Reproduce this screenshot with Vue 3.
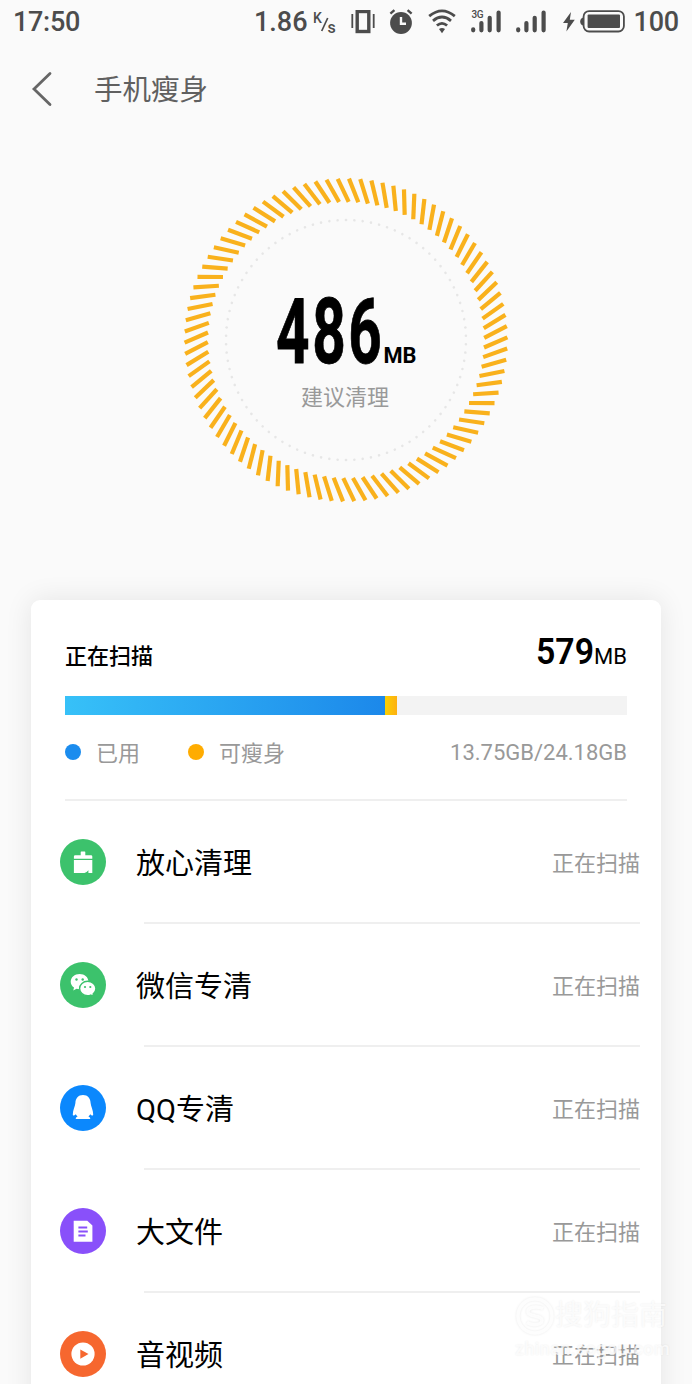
<template>
  <div class="page">
    <header class="status-bar">
      <span class="time">17:50</span>
      <div class="status-right">
        <span class="speed">1.86</span>
        <svg class="unit" width="26" height="32" viewBox="0 0 26 32">
          <text x="0" y="16.5" font-size="14">K</text>
          <path d="M8.7 25 L14.7 12" stroke-width="1.7" />
          <text x="14.5" y="26.5" font-size="16">s</text>
        </svg>
        <svg class="vibrate" width="24" height="24" viewBox="0 0 24 24">
          <path d="M1.3 4v14M22.7 4v14" stroke-width="1.8" />
          <rect x="6.2" y="1.5" width="11.6" height="20" stroke-width="3.4" />
        </svg>
        <svg class="alarm" width="24" height="26" viewBox="0 0 24 26">
          <circle cx="12" cy="14" r="10.9" class="solid" />
          <path d="M1.4 4.7 L5.4 1.2 M18.6 1.2 L22.6 4.7" stroke-width="2.4" />
          <path d="M12 8.1 V14.7 H17" class="hands" />
        </svg>
        <svg class="wifi" width="28" height="25" viewBox="0 0 28 25">
          <path d="M1.2 7.1 Q14 -3.3 26.8 7.1 M5 11.8 Q14 4.3 23 11.8 M8.9 16.5 Q14 12.2 19.1 16.5" stroke-width="2.8" />
          <path d="M11 20 Q14 18 17 20 L14 24.2 Z" class="solid" />
        </svg>
        <svg class="signal" width="31" height="24" viewBox="0 0 31 24">
          <text x="0.5" y="7.5" font-size="10" textLength="12">3G</text>
          <path d="M2.2 20.3V19.3M10.4 20.3V13M18.7 20.3V7.8M27.6 20.3V2.6" stroke-width="4.2" stroke-linecap="round" />
        </svg>
        <svg class="signal second" width="31" height="24" viewBox="0 0 31 24">
          <path d="M2.2 20.3V19.3M10.4 20.3V13M18.7 20.3V7.8M27.6 20.3V2.6" stroke-width="4.2" stroke-linecap="round" />
        </svg>
        <svg class="bolt" width="12" height="20" viewBox="0 0 12 20">
          <path d="M8 0 L0 11 H4.8 L3.4 19.5 L11.8 7.8 H6.8 Z" class="solid" />
        </svg>
        <svg class="battery" width="45" height="24" viewBox="0 0 45 24">
          <path d="M3 7.5 Q.2 8.5 .2 11.5 Q.2 14.5 3 15.5Z" class="solid" />
          <rect x="3.6" y="1.1" width="40.3" height="20.4" rx="5.5" stroke-width="1.8" />
          <rect x="7.6" y="4.6" width="32.4" height="13.4" rx="1" class="solid" />
        </svg>
        <span class="level">100</span>
      </div>
    </header>

    <nav class="nav">
      <svg class="back" width="22" height="36" viewBox="0 0 22 36">
        <path d="M19 2.5 L3 18 L19 33.5" />
      </svg>
      <h1>手机瘦身</h1>
    </nav>

    <section class="gauge">
      <svg width="340" height="340" viewBox="-170 -170 340 340">
        <line
          v-for="n in 90"
          :key="'t' + n"
          class="tick"
          x1="-8.3"
          y1="-161.2"
          x2="2.7"
          y2="-138.2"
          :transform="`rotate(${n * 4})`"
        />
        <circle
          v-for="n in 90"
          :key="'d' + n"
          class="dot"
          cx="0"
          cy="-120"
          r="1.3"
          :transform="`rotate(${n * 4})`"
        />
        <text class="amount" x="0" y="0" transform="translate(-70 23) scale(0.65 1)">486</text>
        <text class="amount-unit" x="37.5" y="22.5" textLength="33" lengthAdjust="spacingAndGlyphs">MB</text>
        <text class="advice" x="-45" y="65">建议清理</text>
      </svg>
    </section>

    <main class="card">
      <div class="summary">
        <div class="summary-head">
          <span class="scanning">正在扫描</span>
          <svg class="found" width="92" height="46" viewBox="0 0 92 46">
            <text class="found-num" x="1" y="38" textLength="58" lengthAdjust="spacingAndGlyphs">579</text>
            <text class="found-unit" x="59" y="38" textLength="33" lengthAdjust="spacingAndGlyphs">MB</text>
          </svg>
        </div>
        <div class="bar">
          <div class="used" :style="{ width: usedPercent + '%' }"></div>
          <div class="slim" :style="{ width: slimPercent + '%' }"></div>
        </div>
        <div class="legend">
          <i class="mark blue"></i>
          <span class="label">已用</span>
          <i class="mark yellow"></i>
          <span class="label">可瘦身</span>
          <span class="storage">13.75GB/24.18GB</span>
        </div>
      </div>

      <ul class="list">
        <li v-for="item in items" :key="item.name" class="row">
          <svg class="icon" :class="item.icon" width="46" height="46" viewBox="0 0 46 46">
            <circle cx="23" cy="23" r="23" class="disc" />
            <template v-if="item.icon === 'brush'">
              <path d="M20.7 16.3V13Q20.7 12.4 21.3 12.4H24.7Q25.3 12.4 25.3 13V16.3H31Q32.3 16.3 32.3 17.6V19.7H13.9V17.6Q13.9 16.3 15.2 16.3Z" />
              <path d="M13.9 21H32.3V33.9H28.4V31.2Q26.8 33.6 24.5 33.9H13.9Z" />
            </template>
            <template v-else-if="item.icon === 'wechat'">
              <path d="M19.6 12C14.6 12 10.7 15.4 10.7 19.7C10.7 22.2 12 24.2 14 25.6L13.3 28.5L16.5 26.8C17.5 27.1 18.6 27.3 19.6 27.3C24.6 27.3 28.5 24 28.5 19.7S24.6 12 19.6 12Z" />
              <path class="front" d="M27.6 19.3C23.1 19.3 19.6 22.5 19.6 26.5S23.1 33.7 27.6 33.7C28.7 33.7 29.7 33.5 30.7 33.1L33.8 34.7L33.1 32C34.9 30.7 35.9 28.8 35.9 26.5C35.9 22.5 32.2 19.3 27.6 19.3Z" />
              <g class="eyes">
                <circle cx="16.5" cy="17.5" r="1.2" />
                <circle cx="22.7" cy="17.5" r="1.2" />
                <circle cx="25" cy="25" r="1.1" />
                <circle cx="30.3" cy="25" r="1.1" />
              </g>
            </template>
            <path
              v-else-if="item.icon === 'qq'"
              d="M23 10C18.2 10 15.6 13.4 15.4 18C15.2 21.4 12.8 25 12.8 29.4C12.8 31 14.4 30.6 15.8 29.2C16.2 30.2 16.9 31 17.6 31.6C16.3 32 15.6 32.8 15.8 34H30.2C30.4 32.8 29.7 32 28.4 31.6C29.1 31 29.8 30.2 30.2 29.2C31.6 30.6 33.2 31 33.2 29.4C33.2 25 30.8 21.4 30.6 18C30.4 13.4 27.8 10 23 10Z"
            />
            <template v-else-if="item.icon === 'file'">
              <path d="M13.7 12.7H27.3L32.4 17.6V33.8H13.7Z" />
              <path class="lines" d="M18.4 19.5H27.2M18.4 23.5H27.8M18.4 27.5H25.5" />
            </template>
            <template v-else>
              <circle cx="23" cy="23" r="11.6" />
              <path class="play" d="M20.3 18.4L28.5 23L20.3 27.8Z" />
            </template>
          </svg>
          <div class="row-body">
            <span class="name">{{ item.name }}</span>
            <span class="state">{{ item.state }}</span>
          </div>
        </li>
      </ul>
    </main>

    <div class="watermark">
      <svg width="40" height="40" viewBox="0 0 40 40">
        <circle cx="20" cy="20" r="17" />
        <path d="M28 12.5C22 9.5 12 11 13 16.5C14 21 27 19 27 24.5C27 29 17 30 12 26.5" />
      </svg>
      <span class="brand">搜狗指南</span>
      <span class="site">zhinan.sogou.com</span>
    </div>
  </div>
</template>

<script setup>
import { ref } from 'vue'

const usedPercent = ref(56.9)
const slimPercent = ref(2.2)

const items = ref([
  { name: '放心清理', icon: 'brush', state: '正在扫描' },
  { name: '微信专清', icon: 'wechat', state: '正在扫描' },
  { name: 'QQ专清', icon: 'qq', state: '正在扫描' },
  { name: '大文件', icon: 'file', state: '正在扫描' },
  { name: '音视频', icon: 'video', state: '正在扫描' }
])
</script>

<style>
body {
  margin: 0;
  background: #fafafa;
}
</style>

<style scoped>
.page {
  position: relative;
  width: 692px;
  height: 1384px;
  overflow: hidden;
  background: #fafafa;
  font-family: Roboto, "Noto Sans CJK SC", sans-serif;
  color: #000;
}

/* 状态栏 */
.status-bar {
  display: flex;
  justify-content: space-between;
  align-items: center;
  height: 43px;
  padding: 0 13px;
  box-sizing: border-box;
  font-size: 27px;
  font-weight: 500;
  color: #4c4c4c;
}

.time {
  letter-spacing: -0.3px;
}

.status-right {
  display: flex;
  align-items: center;
}

.status-right svg {
  fill: none;
  stroke: #4c4c4c;
}

.status-right svg .solid,
.status-right svg text {
  fill: #4c4c4c;
  stroke: none;
}

.status-right svg .hands {
  stroke: #fafafa;
  stroke-width: 2.4;
}

.unit {
  margin-left: 5px;
}

.vibrate {
  margin-left: 12px;
}

.alarm {
  margin-left: 14px;
}

.wifi {
  margin-left: 15px;
}

.signal {
  margin-left: 15px;
}

.signal.second {
  margin-left: 14px;
}

.bolt {
  margin-left: 16px;
}

.battery {
  margin-left: 5px;
}

.level {
  margin-left: 9px;
  letter-spacing: -0.2px;
}

/* 标题栏 */
.nav {
  display: flex;
  align-items: center;
  height: 92px;
  padding-left: 31px;
}

.back {
  fill: none;
  stroke: #666;
  stroke-width: 2.8;
  stroke-linecap: round;
}

.nav h1 {
  margin: 4px 0 0 41px;
  font-size: 28.5px;
  line-height: 42px;
  font-weight: 400;
  color: #606060;
}

/* 圆环 */
.gauge {
  display: flex;
  justify-content: center;
  height: 430px;
  padding-top: 35px;
  box-sizing: border-box;
}

.tick {
  stroke: #f9b11c;
  stroke-width: 4.2;
}

.dot {
  fill: #e6e6e6;
}

.amount {
  font-size: 90px;
  font-weight: 700;
  letter-spacing: 4px;
  stroke: #000;
  stroke-width: 0.8;
}

.amount-unit {
  font-size: 22px;
  font-weight: 700;
}

.advice {
  font-size: 22px;
  fill: #999;
}

/* 卡片 */
.card {
  width: 630px;
  height: 860px;
  margin: 35px 0 0 31px;
  border-radius: 9px;
  background: #fff;
  box-shadow: 0 0 28px rgba(0, 0, 0, 0.09);
}

.summary {
  height: 201px;
  margin: 0 34px;
  box-sizing: border-box;
  border-bottom: 2px solid #efefef;
}

.summary-head {
  display: flex;
  justify-content: space-between;
  align-items: flex-end;
  height: 96px;
}

.scanning {
  font-size: 22px;
  line-height: 32px;
  font-weight: 500;
  margin-bottom: 23px;
}

.found {
  margin-bottom: 24px;
}

.found-num {
  font-size: 37px;
  font-weight: 600;
}

.found-unit {
  font-size: 22px;
}

.bar {
  display: flex;
  height: 19px;
  background: #f3f3f3;
}

.used {
  background: linear-gradient(90deg, #37c1f8, #1c88ea);
}

.slim {
  background: linear-gradient(90deg, #fcd000, #fdb012);
}

.legend {
  display: flex;
  align-items: center;
  height: 74px;
  font-size: 22px;
  color: #999;
}

.label {
  margin-bottom: 2px;
}

.mark {
  width: 16px;
  height: 16px;
  margin-right: 15px;
  border-radius: 50%;
}

.blue {
  background: #1b8cee;
}

.yellow {
  margin-left: 48px;
  background: #ffac00;
}

.storage {
  margin-left: auto;
}

.list {
  margin: 0;
  padding: 0 21px 0 29px;
  list-style: none;
}

.row {
  display: flex;
  align-items: center;
  height: 123px;
}

.row-body {
  display: flex;
  flex: 1;
  justify-content: space-between;
  align-items: center;
  height: 123px;
  margin-left: 38px;
  padding-bottom: 2px;
  box-sizing: border-box;
  border-bottom: 2px solid #efefef;
}

.name {
  margin-left: -8px;
  font-size: 29px;
}

.state {
  font-size: 22px;
  color: #999;
}

.icon {
  margin-bottom: 2px;
  fill: #fff;
}

.brush .disc,
.wechat .disc,
.wechat .eyes {
  fill: #3cc26c;
}

.wechat .front {
  stroke: #3cc26c;
  stroke-width: 1.4;
}

.qq .disc {
  fill: #0b88fd;
}

.file .disc {
  fill: #8950fa;
}

.file .lines {
  stroke: #8950fa;
  stroke-width: 1.8;
}

.video .disc,
.video .play {
  fill: #f6672f;
}

/* 水印 */
.watermark {
  position: absolute;
  left: 515px;
  top: 1296px;
  display: grid;
  grid-template-columns: 40px 116px;
  color: rgba(255, 255, 255, 0.75);
  text-shadow: 0 0 2px rgba(0, 0, 0, 0.08);
}

.watermark svg {
  fill: none;
  stroke: rgba(255, 255, 255, 0.85);
  stroke-width: 3.5;
  filter: drop-shadow(0 0 1px rgba(0, 0, 0, 0.1));
}

.brand {
  font-size: 28px;
  line-height: 40px;
  font-weight: 400;
}

.site {
  grid-column: 1 / 3;
  font-size: 18px;
  line-height: 26px;
  font-weight: 500;
  letter-spacing: 0.4px;
}
</style>
